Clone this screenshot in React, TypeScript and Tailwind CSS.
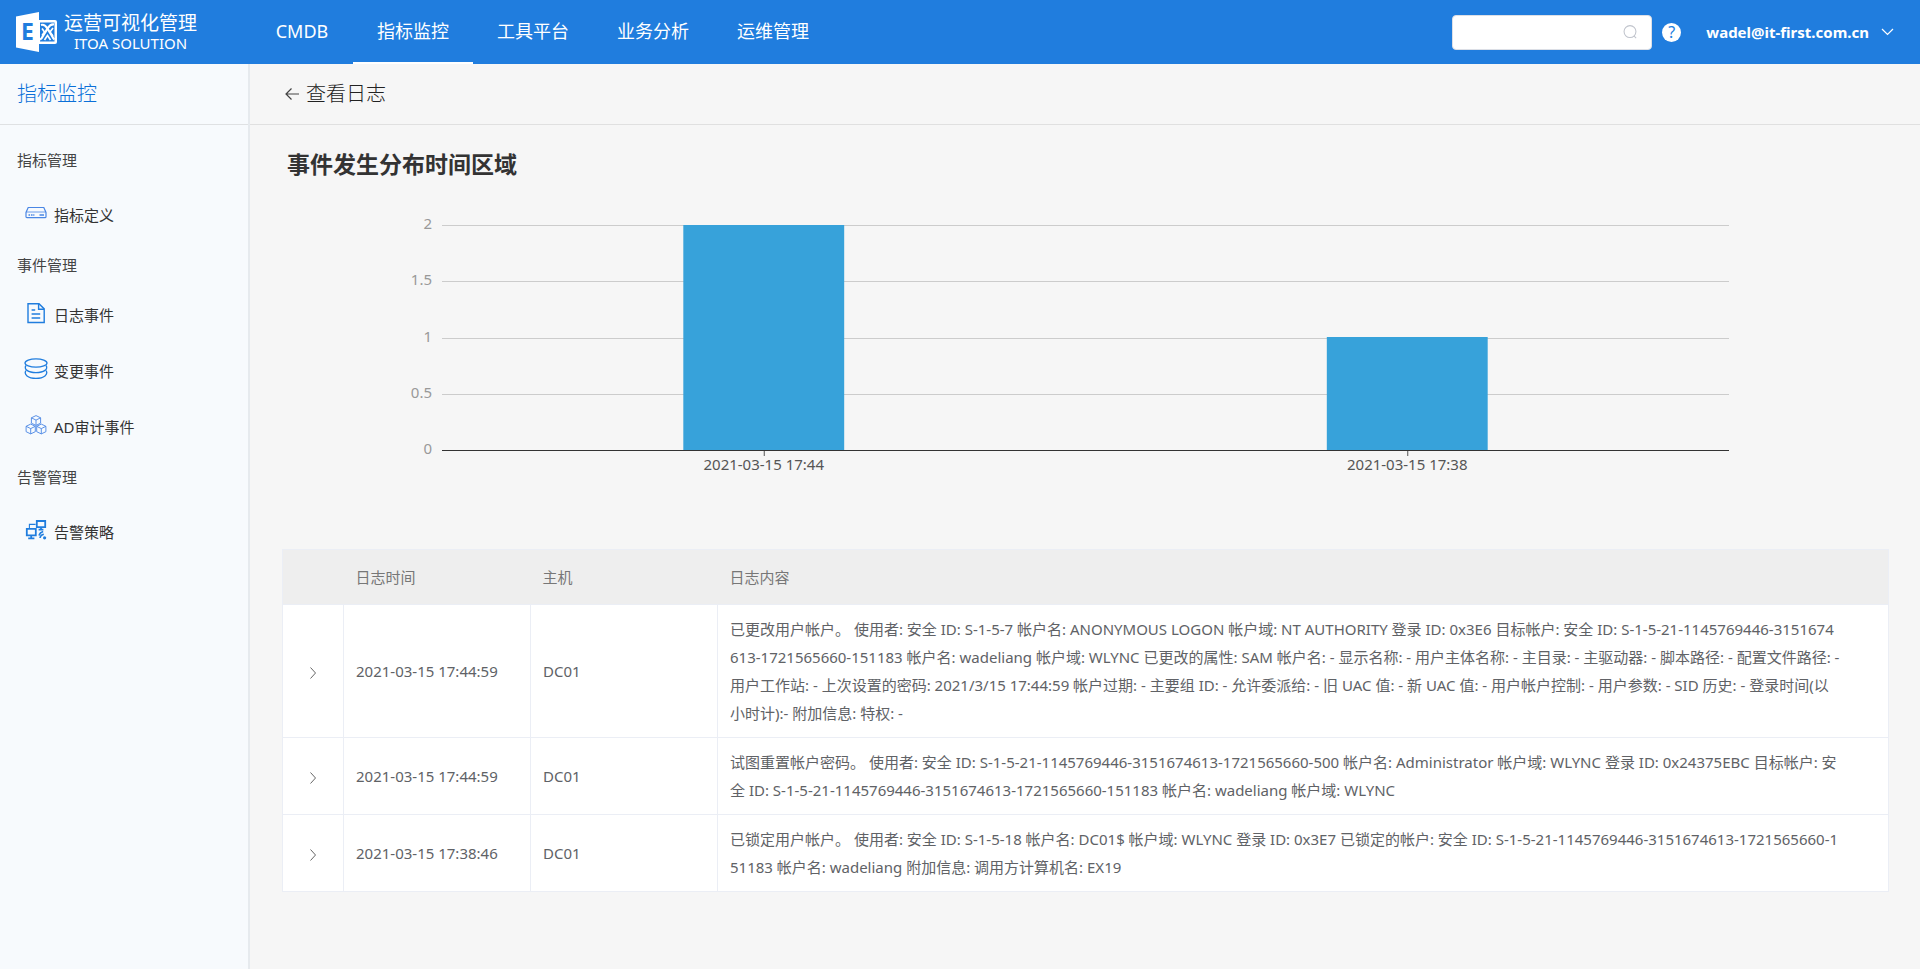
import type { ReactNode } from "react";

const navItems = ["CMDB", "指标监控", "工具平台", "业务分析", "运维管理"];
const activeNav = "指标监控";

const bars = [
  { label: "2021-03-15 17:44", value: 2 },
  { label: "2021-03-15 17:38", value: 1 },
];

const ticks = [
  { label: "2", y: 0 },
  { label: "1.5", y: 56 },
  { label: "1", y: 113 },
  { label: "0.5", y: 169 },
];

const PLOT_HEIGHT = 225;
const MAX_VALUE = 2;

const logs = [
  {
    time: "2021-03-15 17:44:59",
    host: "DC01",
    lines: [
      "已更改用户帐户。 使用者: 安全 ID: S-1-5-7 帐户名: ANONYMOUS LOGON 帐户域: NT AUTHORITY 登录 ID: 0x3E6 目标帐户: 安全 ID: S-1-5-21-1145769446-3151674",
      "613-1721565660-151183 帐户名: wadeliang 帐户域: WLYNC 已更改的属性: SAM 帐户名: - 显示名称: - 用户主体名称: - 主目录: - 主驱动器: - 脚本路径: - 配置文件路径: -",
      "用户工作站: - 上次设置的密码: 2021/3/15 17:44:59 帐户过期: - 主要组 ID: - 允许委派给: - 旧 UAC 值: - 新 UAC 值: - 用户帐户控制: - 用户参数: - SID 历史: - 登录时间(以",
      "小时计):- 附加信息: 特权: -",
    ],
  },
  {
    time: "2021-03-15 17:44:59",
    host: "DC01",
    lines: [
      "试图重置帐户密码。 使用者: 安全 ID: S-1-5-21-1145769446-3151674613-1721565660-500 帐户名: Administrator 帐户域: WLYNC 登录 ID: 0x24375EBC 目标帐户: 安",
      "全 ID: S-1-5-21-1145769446-3151674613-1721565660-151183 帐户名: wadeliang 帐户域: WLYNC",
    ],
  },
  {
    time: "2021-03-15 17:38:46",
    host: "DC01",
    lines: [
      "已锁定用户帐户。 使用者: 安全 ID: S-1-5-18 帐户名: DC01$ 帐户域: WLYNC 登录 ID: 0x3E7 已锁定的帐户: 安全 ID: S-1-5-21-1145769446-3151674613-1721565660-1",
      "51183 帐户名: wadeliang 附加信息: 调用方计算机名: EX19",
    ],
  },
];

const DiskIcon = () => (
  <svg width="24" height="24" viewBox="0 0 24 24" fill="none" stroke="#4a86e4" strokeWidth="1.2">
    <path d="M4.2 6.500h15.600l2.200 5v4.200a1 1 0 0 1-1 1H3a1 1 0 0 1-1-1v-4.200z" />
    <path d="M2.200 11h19.600" strokeWidth="0.8" />
    <path d="M4.500 14h1.600M7 14h1.600M9.200 14h1.200M15.500 14h4.500" strokeWidth="1.6" />
  </svg>
);

const FileIcon = () => (
  <svg width="24" height="24" viewBox="0 0 24 24" fill="none" stroke="#207dde" strokeWidth="1.4">
    <path d="M4 2.700h11l5.200 5.200v13.600H4z" />
    <path d="M14.600 2.900v5.300h5.400" />
    <path d="M7.600 9h3.600M7.600 13h8.600M7.600 17h8.600" />
  </svg>
);

// three stacked discs
const DatabaseIcon = () => (
  <svg width="24" height="24" viewBox="0 0 24 24" fill="none" stroke="#207dde" strokeWidth="1.3">
    <ellipse cx="12" cy="6" rx="11" ry="4.200" />
    <path d="M2 8.500C-.6 12 4 15.600 12 15.600S24.600 12 22 8.500" />
    <path d="M2 13.500C-.6 17.500 4 21.300 12 21.300s12.600-3.800 10-7.800" />
  </svg>
);

const Cube = ({ x, y }: { x: number; y: number }) => (
  <g transform={`translate(${x} ${y})`}>
    <path d="M0-4.900 4.600-2.700v5.400L0 4.900-4.600 2.700v-5.400z" />
    <path d="M-4.600-2.700 0-.4 4.600-2.700M0-.4V4.900" />
  </g>
);

const CubesIcon = () => (
  <svg width="24" height="24" viewBox="0 0 24 24" fill="none" stroke="#4a86e4" strokeWidth="0.9">
    <Cube x={12} y={7.5} />
    <Cube x={6.7} y={16} />
    <Cube x={17.3} y={16} />
  </svg>
);

const ScreensIcon = () => (
  <svg width="24" height="24" viewBox="0 0 24 24" fill="none" stroke="#207dde" strokeWidth="1.8">
    <path d="M12.800 3h8.400v6.200h-8.400z" />
    <path d="M2.800 10.800h9v6.600h-9zM7.200 17.400v2.800M4.200 20.400h6.200M17 9.200v2.400M14.600 11.600h4.800" />
    <path d="M5.400 10V6.400h6.200" strokeWidth="1.1" />
    <path d="M15 17.400a6 6 0 0 1 4.200-4M16 20a4.500 4.500 0 0 1 3.800-3.800" strokeWidth="1.6" />
    <circle cx="20.6" cy="19.8" r="1.6" fill="#207dde" stroke="none" />
  </svg>
);

interface MenuGroup {
  title: string;
  listClass: string;
  items: { label: string; icon: ReactNode }[];
}

const menu: MenuGroup[] = [
  {
    title: "指标管理",
    listClass: "pt-[5px]",
    items: [{ label: "指标定义", icon: <DiskIcon /> }],
  },
  {
    title: "事件管理",
    listClass: "",
    items: [
      { label: "日志事件", icon: <FileIcon /> },
      { label: "变更事件", icon: <DatabaseIcon /> },
      { label: "AD审计事件", icon: <CubesIcon /> },
    ],
  },
  {
    title: "告警管理",
    listClass: "pt-[5px]",
    items: [{ label: "告警策略", icon: <ScreensIcon /> }],
  },
];

const Logo = () => (
  <a href="#" className="flex w-[251px] shrink-0 items-center gap-[7px] pl-4">
    <svg width="41" height="40" viewBox="0 0 41 40">
      <path d="M22 8h17a2 2 0 0 1 2 2v20a2 2 0 0 1-2 2H22z" fill="#fff" />
      <path d="M24 10.500h14.500v19H24z" fill="#207dde" />
      <g fill="none" stroke="#fff" strokeWidth="2.2">
        <path d="M25 13c3-1 4.500.5 6.200 3.200L36 24c1 2 1.500 3 2.500 3.500" />
        <path d="M38 12.500c-3-.5-4.500 1-6.200 3.700L27 24c-1 2-1.500 3-3 3.500" />
        <path d="m26 16.500 2.500 3.500-2.500 3.500M37 16l-3 4 3 4M28.500 28l3-4.500 3 4.500" strokeWidth="1.6" />
      </g>
      <path d="M0 4.500 23 0v40L0 35.500z" fill="#fff" />
      <text x="5" y="28" fontSize="23" fontWeight="700" fill="#207dde" fontFamily="Open Sans, sans-serif">
        E
      </text>
    </svg>
    <span className="flex flex-col items-center pt-[2px] text-white">
      <span className="text-[19px] leading-5">运营可视化管理</span>
      <span className="text-[15px] leading-5">ITOA SOLUTION</span>
    </span>
  </a>
);

const Header = () => (
  <header className="flex h-16 items-stretch bg-[#207dde] text-white">
    <Logo />
    <nav className="flex grow">
      {navItems.map((item) => (
        <a
          key={item}
          href="#"
          className={
            item === activeNav
              ? "flex min-w-[102px] items-center justify-center border-b-2 border-white px-6 text-lg"
              : "flex min-w-[102px] items-center justify-center border-b-2 border-transparent px-6 text-lg"
          }
        >
          {item}
        </a>
      ))}
    </nav>
    <div className="flex items-center pr-[26px]">
      <label className="flex h-[35px] w-[200px] items-center rounded border border-[#dcdfe6] bg-white pr-[14px] pl-3">
        <input type="text" aria-label="搜索" className="w-full min-w-0 text-sm text-[#606266] outline-none" />
        <svg width="14" height="14" viewBox="0 0 16 16" fill="none" stroke="#c0c4cc" strokeWidth="1.2" className="shrink-0">
          <circle cx="8" cy="7.5" r="6.8" />
          <path d="m12.500 12.500 2.500 2.500" />
        </svg>
      </label>
      <button type="button" className="ml-[10px] flex size-[19px] items-center justify-center rounded-full bg-white text-base leading-none text-[#207dde]">
        ?
      </button>
      <button type="button" className="ml-[25px] flex items-center gap-3 text-[15px] font-bold">
        wadel@it-first.com.cn
        <svg width="13" height="8" viewBox="0 0 13 8" fill="none" stroke="#fff" strokeWidth="1.2">
          <path d="m1 1 5.500 5.500L12 1" />
        </svg>
      </button>
    </div>
  </header>
);

const Sidebar = () => (
  <aside className="w-[250px] shrink-0 border-r-2 border-[#e6eaee] bg-[#f7fafd]">
    <h2 className="flex h-[61px] items-center border-b border-[#dfe1e3] pl-[17px] text-xl font-light text-[#0a6fd8]">
      指标监控
    </h2>
    <div className="pt-[13px]">
      {menu.map((group) => (
        <section key={group.title}>
          <h3 className="flex h-11 items-center pl-[17px] text-[15px] text-[#444]">{group.title}</h3>
          <ul className={group.listClass}>
            {group.items.map((item) => (
              <li key={item.label}>
                <a href="#" className="flex h-14 items-center gap-[6px] pl-6 text-[15px] text-[#333]">
                  <span className="pb-1">{item.icon}</span>
                  {item.label}
                </a>
              </li>
            ))}
          </ul>
        </section>
      ))}
    </div>
  </aside>
);

const Chart = () => {
  const slot = 100 / bars.length;
  return (
    <div className="px-40 pt-[46px] pb-[92px]">
      <svg width="100%" height="232" className="block overflow-visible text-[15px]">
        {ticks.map((tick) => (
          <g key={tick.label}>
            <rect x="0" y={tick.y} width="100%" height="1" fill="#ccc" />
            <text x="-10" y={tick.y + 4} textAnchor="end" fill="#999">
              {tick.label}
            </text>
          </g>
        ))}
        <text x="-10" y={PLOT_HEIGHT + 4} textAnchor="end" fill="#999">
          0
        </text>
        {bars.map((bar, i) => {
          const height = Math.ceil((bar.value / MAX_VALUE) * PLOT_HEIGHT);
          return (
            <g key={bar.label}>
              <rect
                x={`${slot * i + slot * 0.375}%`}
                y={PLOT_HEIGHT - height}
                width={`${slot * 0.25}%`}
                height={height}
                fill="#37a2da"
              />
              <rect x={`${slot * (i + 0.5)}%`} y={PLOT_HEIGHT} width="1" height="6" fill="#555" />
              <text x={`${slot * (i + 0.5)}%`} y={PLOT_HEIGHT + 20} textAnchor="middle" fill="#555">
                {bar.label}
              </text>
            </g>
          );
        })}
        <rect x="0" y={PLOT_HEIGHT} width="100%" height="1" fill="#333" />
      </svg>
    </div>
  );
};

const LogTable = () => (
  <table className="w-full table-fixed border-collapse border border-[#ebeef5] bg-white text-left text-[15px] text-[#606266]">
    <colgroup>
      <col className="w-[61px]" />
      <col className="w-[187px]" />
      <col className="w-[187px]" />
      <col />
    </colgroup>
    <thead>
      <tr className="h-[55px] bg-[#eee] text-[#777]">
        <th aria-label="展开" />
        <th className="px-3 font-normal">日志时间</th>
        <th className="px-3 font-normal">主机</th>
        <th className="px-3 font-normal">日志内容</th>
      </tr>
    </thead>
    <tbody>
      {logs.map((log, i) => (
        <tr key={i}>
          <td className="border border-[#ebeef5] text-center">
            <button type="button" aria-label="展开" className="align-middle">
              <svg width="8" height="12" viewBox="0 0 8 12" fill="none" stroke="#666" strokeWidth="1">
                <path d="m1.500.5 5 5.500-5 5.500" />
              </svg>
            </button>
          </td>
          <td className="border border-[#ebeef5] px-3">{log.time}</td>
          <td className="border border-[#ebeef5] px-3">{log.host}</td>
          <td className="border border-[#ebeef5] px-3 py-[10px] leading-7 whitespace-nowrap">
            {log.lines.map((line) => (
              <div key={line}>{line}</div>
            ))}
          </td>
        </tr>
      ))}
    </tbody>
  </table>
);

export default function App() {
  return (
    <div className="flex min-h-screen flex-col bg-[#f6f6f6] font-['Noto_Sans','Noto_Sans_CJK_SC',sans-serif]">
      <Header />
      <div className="flex grow">
        <Sidebar />
        <main className="min-w-0 grow">
          <div className="flex h-[61px] items-center border-b border-[#e0e0e0] pl-[35px]">
            <a href="#" className="flex items-center gap-[7px] text-xl font-light text-[#222]">
              <svg width="14" height="12" viewBox="0 0 14 12" fill="none" stroke="#444" strokeWidth="1.2">
                <path d="M6.500.5 1 6l5.500 5.500M1 6h13" />
              </svg>
              查看日志
            </a>
          </div>
          <div className="pt-6 pr-[31px] pl-8">
            <h1 className="pl-[5px] text-[23px] leading-[30px] font-bold text-[#333]">事件发生分布时间区域</h1>
            <Chart />
            <LogTable />
          </div>
        </main>
      </div>
    </div>
  );
}
